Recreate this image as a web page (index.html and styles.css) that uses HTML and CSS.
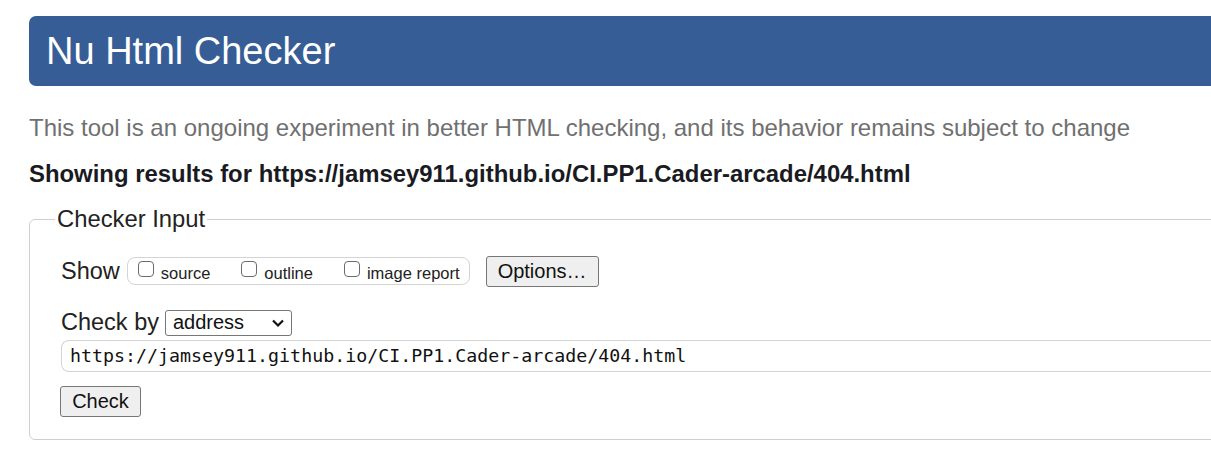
FILE: index.html
```html
<!DOCTYPE html>
<html lang="en">
<head>
<meta charset="utf-8">
<title>Nu Html Checker</title>
<link rel="stylesheet" href="styles.css">
</head>
<body>
<div class="page">
  <h1 class="banner">Nu Html Checker</h1>
  <p class="intro">This tool is an ongoing experiment in better HTML checking, and its behavior remains subject to change</p>
  <p class="showing">Showing results for https://jamsey911.github.io/CI.PP1.Cader-arcade/404.html</p>
  <fieldset class="checker">
    <legend class="checker-legend">Checker Input</legend>
    <div class="row show-row">
      <span class="row-label">Show</span>
      <span class="show-group">
        <label class="opt"><input type="checkbox" class="cb"><span>source</span></label>
        <label class="opt"><input type="checkbox" class="cb"><span>outline</span></label>
        <label class="opt"><input type="checkbox" class="cb"><span>image report</span></label>
      </span>
      <button class="btn btn-options" type="button">Options…</button>
    </div>
    <div class="row by-row">
      <span class="row-label">Check by</span>
      <span class="select">address<svg class="chev" width="14" height="10" viewBox="0 0 14 10"><path d="M2 2.5 L7 7.5 L12 2.5" fill="none" stroke="#111" stroke-width="2.2"/></svg></span>
    </div>
    <div class="url">https://jamsey911.github.io/CI.PP1.Cader-arcade/404.html</div>
    <button class="btn btn-check" type="button">Check</button>
  </fieldset>
</div>
</body>
</html>
```
FILE: styles.css
```css
html, body {
  margin: 0;
  padding: 0;
  overflow: hidden;
  background: #fff;
}
body {
  font-family: "Liberation Sans", Arial, sans-serif;
  color: #222;
}
.page {
  width: 1320px;
  padding: 16px 0 0 29px;
}
.banner {
  margin: 0;
  height: 70px;
  line-height: 70px;
  background: #365d95;
  color: #fff;
  font-weight: normal;
  font-size: 38px;
  padding-left: 17px;
  border-radius: 7px;
}
.intro {
  margin: 27px 0 0;
  font-size: 24px;
  line-height: 30px;
  color: #707070;
}
.showing {
  margin: 16px 0 0;
  font-size: 23.9px;
  line-height: 30px;
  font-weight: bold;
  color: #1a1a22;
}
.checker {
  margin: 16px 0 0;
  border: 1px solid #cfcfcf;
  border-radius: 6px;
  padding: 23px 0 22px 31px;
  min-width: 0;
}
.checker-legend {
  font-size: 23.8px;
  padding: 0 2px;
  margin-left: -6px;
  color: #222;
}
.row {
  display: flex;
  align-items: center;
}
.row-label {
  font-size: 23.5px;
  margin-right: 7px;
}
.show-row {
  height: 30px;
}
.show-group {
  display: flex;
  align-items: center;
  height: 26px;
  border: 1px solid #d4d4d4;
  border-radius: 8px;
  padding: 0 9px 0 10px;
  gap: 31px;
}
.opt {
  display: flex;
  align-items: center;
  font-size: 16.5px;
  color: #222;
  gap: 7px;
}
.opt span {
  position: relative;
  top: 2px;
}
.cb {
  appearance: none;
  -webkit-appearance: none;
  margin: 0;
  width: 16px;
  height: 16px;
  border: 1px solid #6b6b6b;
  border-radius: 4px;
  background: #fff;
  position: relative;
  top: -2px;
}
.btn {
  font-family: "Liberation Sans", Arial, sans-serif;
  font-size: 20px;
  color: #111;
  background: #efefef;
  border: 1px solid #767676;
  border-radius: 3px;
  padding: 0;
  height: 31px;
}
.btn-options {
  margin-left: 16px;
  width: 113px;
}
.by-row {
  margin-top: 23px;
  height: 27px;
}
.by-row .row-label {
  margin-right: 6px;
}
.select {
  display: flex;
  align-items: center;
  justify-content: space-between;
  width: 127px;
  height: 26px;
  box-sizing: border-box;
  border: 1px solid #767676;
  border-radius: 3px;
  padding: 0 6px 0 7px;
  font-size: 20px;
  color: #111;
}
.chev {
  display: block;
}
.url {
  margin-top: 4px;
  height: 32px;
  box-sizing: border-box;
  border: 1px solid #d4d4d4;
  border-right: none;
  border-radius: 8px 0 0 8px;
  padding-left: 8px;
  font-family: "DejaVu Sans Mono", "Liberation Mono", monospace;
  font-size: 18.3px;
  line-height: 30px;
  color: #111;
}
.btn-check {
  margin-top: 14px;
  width: 81px;
  margin-left: -1px;
}
```
